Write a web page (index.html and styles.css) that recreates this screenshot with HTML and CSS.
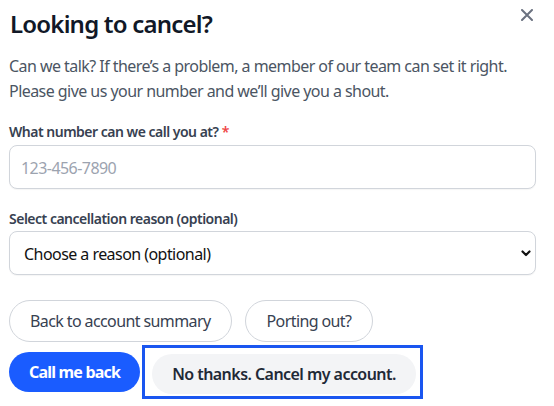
FILE: index.html
```html
<!DOCTYPE html>
<html lang="en">
<head>
<meta charset="utf-8">
<link rel="stylesheet" href="styles.css">
</head>
<body>
<div class="modal">
  <div class="header">
    <h1 class="title">Looking to cancel?</h1>
    <button class="close" aria-label="Close">
      <svg width="12" height="12" viewBox="0 0 12 12"><path d="M1 1L11 11M11 1L1 11" stroke="#6b7280" stroke-width="2" stroke-linecap="round"/></svg>
    </button>
  </div>
  <p class="intro">Can we talk? If there’s a problem, a member of our team can set it right. Please give us your number and we’ll give you a shout.</p>
  <label class="label label-phone">What number can we call you at? <span class="req">*</span></label>
  <input class="field input" type="text" placeholder="123-456-7890">
  <label class="label label-reason">Select cancellation reason (optional)</label>
  <div class="select-wrap">
    <select class="field select">
      <option>Choose a reason (optional)</option>
    </select>
    <svg class="chevron" width="10" height="7" viewBox="0 0 10 7"><path d="M1.5 1.5L5 5L8.5 1.5" fill="none" stroke="#111" stroke-width="2.2" stroke-linecap="round" stroke-linejoin="round"/></svg>
  </div>
  <div class="row row-links">
    <button class="pill outline">Back to account summary</button>
    <button class="pill outline porting">Porting out?</button>
  </div>
  <div class="row row-actions">
    <button class="pill primary">Call me back</button>
    <span class="focus-ring"><button class="pill secondary">No thanks. Cancel my account.</button></span>
  </div>
</div>
</body>
</html>
```
FILE: styles.css
```css
* { box-sizing: border-box; }
html, body { margin: 0; padding: 0; background: #fff; }
body {
  font-family: "Noto Sans", "Open Sans", sans-serif;
  color: #4b5563;
  letter-spacing: -0.55px;
}
.modal {
  width: 554px;
  padding: 9px 18px 0 9px;
  display: flex;
  flex-direction: column;
}
.header {
  display: flex;
  justify-content: space-between;
  align-items: flex-start;
}
.title {
  margin: 0;
  font-size: 24px;
  line-height: 30px;
  font-weight: 600;
  color: #111827;
  padding-left: 1px;
  letter-spacing: -0.8px;
}
.close {
  border: 0;
  background: none;
  padding: 0;
  margin: 0 3px 0 0;
  width: 12px;
  height: 12px;
  display: flex;
}
.intro {
  margin: 15px 0 0;
  font-size: 16px;
  line-height: 25px;
  color: #4b5563;
}
.label {
  display: block;
  font-size: 14px;
  line-height: 20px;
  font-weight: 600;
  color: #374151;
  letter-spacing: -0.5px;
}
.label-phone { margin-top: 18px; }
.label-reason { margin-top: 20px; }
.req { color: #ef4444; }
.field {
  display: block;
  width: 100%;
  height: 44px;
  border: 1px solid #d1d5db;
  border-radius: 8px;
  padding: 2px 11px 0;
  font-family: inherit;
  font-size: 16px;
  letter-spacing: -0.55px;
  color: #111827;
  background: #fff;
  box-shadow: 0 1px 1px rgba(0,0,0,0.04);
}
.input { margin-top: 3px; }
.field::placeholder { color: #9ca3af; }
.select-wrap { position: relative; margin-top: 2px; }
.select {
  -webkit-appearance: none;
  appearance: none;
  padding-left: 14px;
  color: #111;
}
.chevron { position: absolute; right: 5px; top: 19px; }
.row { display: flex; align-items: center; }
.row-links { margin-top: 25px; gap: 13px; }
.row-actions { margin-top: 3px; gap: 2px; }
.pill {
  font-family: inherit;
  font-size: 16px;
  letter-spacing: -0.55px;
  border-radius: 999px;
  cursor: pointer;
  padding-top: 1px;
}
.outline {
  height: 42px;
  padding-left: 20px;
  padding-right: 20px;
  border: 1px solid #d1d5db;
  background: #fff;
  color: #374151;
  letter-spacing: -0.6px;
}
.porting { padding-left: 21px; padding-right: 21px; }
.primary {
  height: 40px;
  padding-left: 20px;
  padding-right: 20px;
  border: 0;
  background: #1a5cff;
  color: #fff;
  font-weight: 700;
  letter-spacing: -0.8px;
}
.focus-ring {
  display: inline-flex;
  border: 3px solid #1a56f0;
  padding: 6px 4px 2px 7px;
}
.secondary {
  height: 40px;
  padding-left: 20px;
  padding-right: 20px;
  border: 0;
  background: #f3f4f6;
  color: #1f2937;
  font-weight: 600;
  letter-spacing: -0.55px;
}
```
